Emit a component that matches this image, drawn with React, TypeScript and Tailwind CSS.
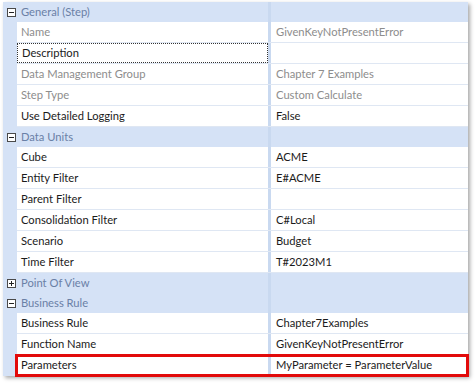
type Row =
  | { kind: 'header'; label: string; open: boolean }
  | { kind: 'prop'; label: string; value: string; dim?: boolean; focus?: boolean; mark?: boolean };

const rows: Row[] = [
  { kind: 'header', label: 'General (Step)', open: true },
  { kind: 'prop', label: 'Name', value: 'GivenKeyNotPresentError', dim: true },
  { kind: 'prop', label: 'Description', value: '', focus: true },
  { kind: 'prop', label: 'Data Management Group', value: 'Chapter 7 Examples', dim: true },
  { kind: 'prop', label: 'Step Type', value: 'Custom Calculate', dim: true },
  { kind: 'prop', label: 'Use Detailed Logging', value: 'False' },
  { kind: 'header', label: 'Data Units', open: true },
  { kind: 'prop', label: 'Cube', value: 'ACME' },
  { kind: 'prop', label: 'Entity Filter', value: 'E#ACME' },
  { kind: 'prop', label: 'Parent Filter', value: '' },
  { kind: 'prop', label: 'Consolidation Filter', value: 'C#Local' },
  { kind: 'prop', label: 'Scenario', value: 'Budget' },
  { kind: 'prop', label: 'Time Filter', value: 'T#2023M1' },
  { kind: 'header', label: 'Point Of View', open: false },
  { kind: 'header', label: 'Business Rule', open: true },
  { kind: 'prop', label: 'Business Rule', value: 'Chapter7Examples' },
  { kind: 'prop', label: 'Function Name', value: 'GivenKeyNotPresentError' },
  { kind: 'prop', label: 'Parameters', value: 'MyParameter = ParameterValue', mark: true },
];

function Expander({ open }: { open: boolean }) {
  return (
    <svg width="9" height="9" viewBox="0 0 9 9" className="block">
      <rect x="0.5" y="0.5" width="8" height="8" fill="#fff" stroke="#4a4a4a" />
      <line x1="2" y1="4.5" x2="7" y2="4.5" stroke="#222" />
      {!open && <line x1="4.5" y1="2" x2="4.5" y2="7" stroke="#222" />}
    </svg>
  );
}

function PropertyRow({ row }: { row: Row }) {
  if (row.kind === 'header') {
    return (
      <div className="flex h-[20px] items-center bg-[#d5e2f6]">
        <div className="flex w-[14px] shrink-0 justify-end pr-[1px]">
          <Expander open={row.open} />
        </div>
        <div className="w-[251px] shrink-0 pl-[4px] text-[#6a80a6]">{row.label}</div>
        <div className="h-full w-[3px] shrink-0 bg-[#c9d9f0]" />
        <div className="flex-1" />
      </div>
    );
  }
  const tone = row.dim ? 'text-[#8d8d8d]' : 'text-[#1b1b1b]';
  return (
    <div className="relative flex h-[21px] bg-[#d5e2f6]">
      <div className="w-[14px] shrink-0" />
      <div className="flex flex-1 border-b border-[#dfe7f3] bg-white">
        <div
          className={`flex w-[251px] shrink-0 items-center pl-[4px] ${tone} ${
            row.focus ? 'border border-dotted border-[#333]' : ''
          }`}
        >
          {row.label}
        </div>
        <div className="w-[3px] shrink-0 bg-[#c9d9f0]" />
        <div className={`flex flex-1 items-center pl-[5px] ${tone}`}>{row.value}</div>
      </div>
      {row.mark && (
        <div className="absolute -top-[1px] -bottom-[1px] left-[12px] -right-[1px] border-[3px] border-[#e20a0a]" />
      )}
    </div>
  );
}

export default function App() {
  return (
    <div className="h-[384px] w-[476px] bg-white pl-[3px] pt-[2px]" style={{ fontFamily: 'Lato, "Noto Sans", sans-serif' }}>
      <div className="flex w-[465px] flex-col text-[11.2px] leading-none shadow-[2px_2px_4px_rgba(0,0,0,0.35)]">
        {rows.map((r, i) => (
          <PropertyRow key={i} row={r} />
        ))}
      </div>
    </div>
  );
}
